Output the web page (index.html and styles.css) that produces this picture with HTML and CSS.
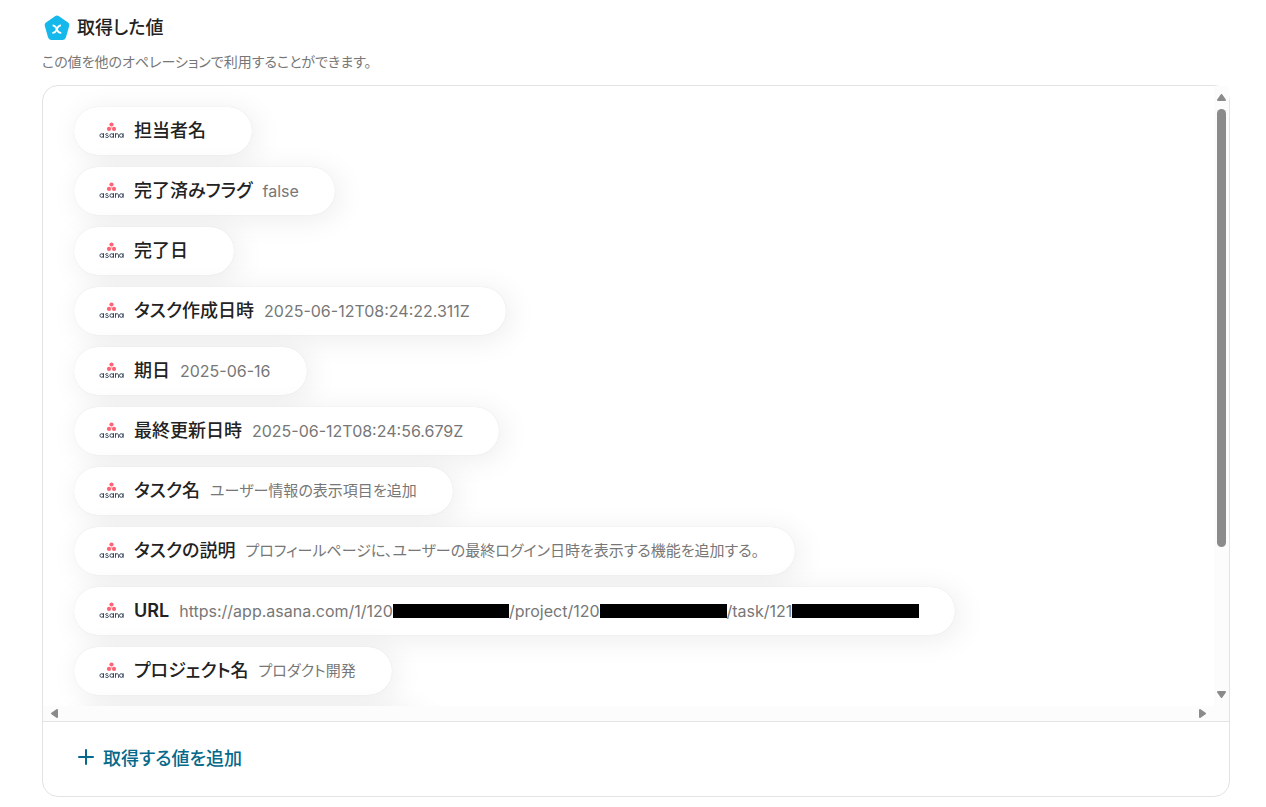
FILE: index.html
```html
<!DOCTYPE html>
<html lang="ja">
<head>
<meta charset="utf-8">
<meta name="viewport" content="width=device-width, initial-scale=1">
<title>取得した値</title>
<link rel="stylesheet" href="styles.css">
</head>
<body>
<svg class="defs" aria-hidden="true">
  <symbol id="asana" viewBox="0 0 25 18">
    <g fill="#ff6277"><circle cx="12.500" cy="2.500" r="2.100"/><circle cx="10" cy="6.900" r="2.100"/><circle cx="15" cy="6.900" r="2.100"/></g>
    <circle cx="12.500" cy="5.400" r="1" fill="#ffa37a" opacity=".7"/>
    <g fill="none" stroke="#2e3c54" stroke-width=".9">
      <circle cx="2.700" cy="13.500" r="1.800"/><path d="M4.500 11.200v4.600"/>
      <path d="M9.200 12.200C8.700 11.400 6.600 11.300 6.600 12.400C6.600 13.700 9.500 13.200 9.500 14.600C9.500 15.800 7 15.800 6.300 14.900"/>
      <circle cx="12.700" cy="13.500" r="1.800"/><path d="M14.500 11.200v4.600"/>
      <path d="M16.500 15.800v-4.600M16.500 13.300c0-2.200 3-2.200 3 0v2.500"/>
      <circle cx="22.300" cy="13.500" r="1.800"/><path d="M24.100 11.200v4.600"/>
    </g>
  </symbol>
</svg>
<main class="page">
  <header class="heading">
    <svg class="badge" viewBox="0 0 26 26" aria-hidden="true">
      <path d="M11 1.200q2-1.400 4 0l9 6.400q1.800 1.400 1.100 3.600l-3.200 11.400q-.7 2.400-3.100 2.400H7.200q-2.400 0-3.100-2.400L.900 11.200Q.200 9 2 7.600z" fill="#14b8ea"/>
      <path d="M8.600 10.400c2.600 0 2.900 1 4.200 3.700s1.700 3.700 4.500 3.700M17 10.400c-2.300 0-2.900 1-4.200 3.700s-1.700 3.700-4.500 3.700" fill="none" stroke="#fff" stroke-width="1.800"/>
    </svg>
    <h1 class="title">取得した値</h1>
  </header>
  <p class="lead">この値を他のオペレーションで利用することができます。</p>
  <section class="panel">
    <div class="scroller">
      <ul class="list">
        <li class="chip"><svg class="logo" role="img" aria-label="asana"><use href="#asana"/></svg><span class="name">担当者名</span><span class="value"></span></li>
        <li class="chip"><svg class="logo" role="img" aria-label="asana"><use href="#asana"/></svg><span class="name">完了済みフラグ</span><span class="value latin">false</span></li>
        <li class="chip"><svg class="logo" role="img" aria-label="asana"><use href="#asana"/></svg><span class="name">完了日</span><span class="value"></span></li>
        <li class="chip"><svg class="logo" role="img" aria-label="asana"><use href="#asana"/></svg><span class="name">タスク作成日時</span><span class="value latin">2025-06-12T08:24:22.311Z</span></li>
        <li class="chip"><svg class="logo" role="img" aria-label="asana"><use href="#asana"/></svg><span class="name">期日</span><span class="value latin">2025-06-16</span></li>
        <li class="chip"><svg class="logo" role="img" aria-label="asana"><use href="#asana"/></svg><span class="name">最終更新日時</span><span class="value latin">2025-06-12T08:24:56.679Z</span></li>
        <li class="chip"><svg class="logo" role="img" aria-label="asana"><use href="#asana"/></svg><span class="name">タスク名</span><span class="value">ユーザー情報の表示項目を追加</span></li>
        <li class="chip"><svg class="logo" role="img" aria-label="asana"><use href="#asana"/></svg><span class="name">タスクの説明</span><span class="value">プロフィールページに、ユーザーの最終ログイン日時を表示する機能を追加する。</span></li>
        <li class="chip"><svg class="logo" role="img" aria-label="asana"><use href="#asana"/></svg><span class="name name-latin">URL</span><span class="value latin url">https://app.asana.com/1/120<span class="mask mask-s"></span>/project/120<span class="mask"></span>/task/121<span class="mask"></span></span></li>
        <li class="chip"><svg class="logo" role="img" aria-label="asana"><use href="#asana"/></svg><span class="name">プロジェクト名</span><span class="value">プロダクト開発</span></li>
        <li class="chip chip-empty" aria-hidden="true"></li>
      </ul>
      <div class="bar-v" aria-hidden="true">
        <svg class="arrow" viewBox="0 0 9 7"><path d="M4.500 1 8 6H1z"/></svg>
        <div class="track"><div class="thumb"></div></div>
        <svg class="arrow" viewBox="0 0 9 7"><path d="M4.500 6 8 1H1z"/></svg>
      </div>
      <div class="bar-h" aria-hidden="true">
        <svg class="arrow-h" viewBox="0 0 7 9"><path d="M1 4.500 6 1v7z"/></svg>
        <svg class="arrow-h" viewBox="0 0 7 9"><path d="M6 4.500 1 1v7z"/></svg>
      </div>
    </div>
    <footer class="footer">
      <button class="add" type="button">
        <svg class="plus" viewBox="0 0 18 18" aria-hidden="true"><path d="M9 2v14M2 9h14"/></svg>取得する値を追加
      </button>
    </footer>
  </section>
</main>
</body>
</html>
```

FILE: styles.css
```css
* { box-sizing: border-box; }

body {
  margin: 0;
  background: #fff;
  color: #222;
  font-family: Inter, "Noto Sans CJK JP", sans-serif;
  font-feature-settings: "palt";
}

.defs { position: absolute; width: 0; height: 0; }

.page {
  display: flex;
  flex-direction: column;
  height: 100vh;
  min-height: 480px;
  padding: 15px 36px 10px 42px;
}

.heading { display: flex; align-items: center; gap: 7px; height: 26px; padding-left: 2px; }
.badge { width: 26px; height: 26px; }
.title { margin: 0; font-size: 18px; line-height: 26px; font-weight: 500; }
.lead { margin: 11px 0 13px; font-size: 14px; line-height: 20px; color: #777; }

.panel {
  display: flex;
  flex: 1;
  flex-direction: column;
  min-height: 0;
  border: 1px solid #e3e3e3;
  border-radius: 16px;
}

.scroller {
  display: grid;
  flex: 1;
  grid-template: minmax(0, 1fr) 15px / minmax(0, 1fr) 15px;
  min-height: 0;
  overflow: hidden;
  border-bottom: 1px solid #e3e3e3;
  border-radius: 15px 5px 0 0;
}

.list {
  display: flex;
  flex-direction: column;
  align-items: flex-start;
  gap: 12px;
  margin: 0;
  padding: 21px 31px;
  overflow: hidden;
  list-style: none;
}

.chip {
  display: flex;
  flex-shrink: 0;
  align-items: center;
  gap: 10px;
  height: 48px;
  padding: 0 36px 0 25px;
  border-radius: 24px;
  background: #fff;
  box-shadow: 0 0 1px rgba(0, 0, 0, .12), 4px 4px 30px rgba(0, 0, 0, .08);
  white-space: nowrap;
}
.chip-empty { width: 350px; }

.logo { width: 25px; height: 18px; }
.name { font-size: 18px; line-height: 26px; font-weight: 500; }
.name-latin { font-weight: 600; }
.value { font-size: 15px; line-height: 22px; color: #777; }
.latin { font-size: 16px; }
.url { display: flex; align-items: center; }
.mask { width: 127px; height: 14px; background: #000; }
.mask-s { width: 116px; }

.bar-v {
  display: flex;
  grid-row: span 2;
  flex-direction: column;
  align-items: center;
  padding: 8px 0 23px;
  background: #fcfcfc;
}
.arrow, .arrow-h { fill: #8b8b8b; stroke: #8b8b8b; stroke-width: 2; stroke-linejoin: round; }
.arrow { flex: none; width: 9px; height: 7px; }
.track { flex: 1; width: 9px; margin: 8px 0 6px; }
.thumb { height: 76%; border-radius: 5px; background: #8b8b8b; }

.bar-h {
  display: flex;
  align-items: center;
  justify-content: space-between;
  padding: 0 8px;
  background: #fcfcfc;
}
.arrow-h { width: 7px; height: 9px; }

.footer { padding: 18px 34px 22px; }
.add {
  display: flex;
  align-items: center;
  gap: 8px;
  height: 34px;
  padding: 0;
  border: 0;
  background: none;
  color: #04698a;
  font: inherit;
  font-size: 18px;
  font-weight: 500;
  cursor: pointer;
}
.plus { width: 18px; height: 18px; fill: none; stroke: currentColor; stroke-width: 2; stroke-linecap: round; }
```
